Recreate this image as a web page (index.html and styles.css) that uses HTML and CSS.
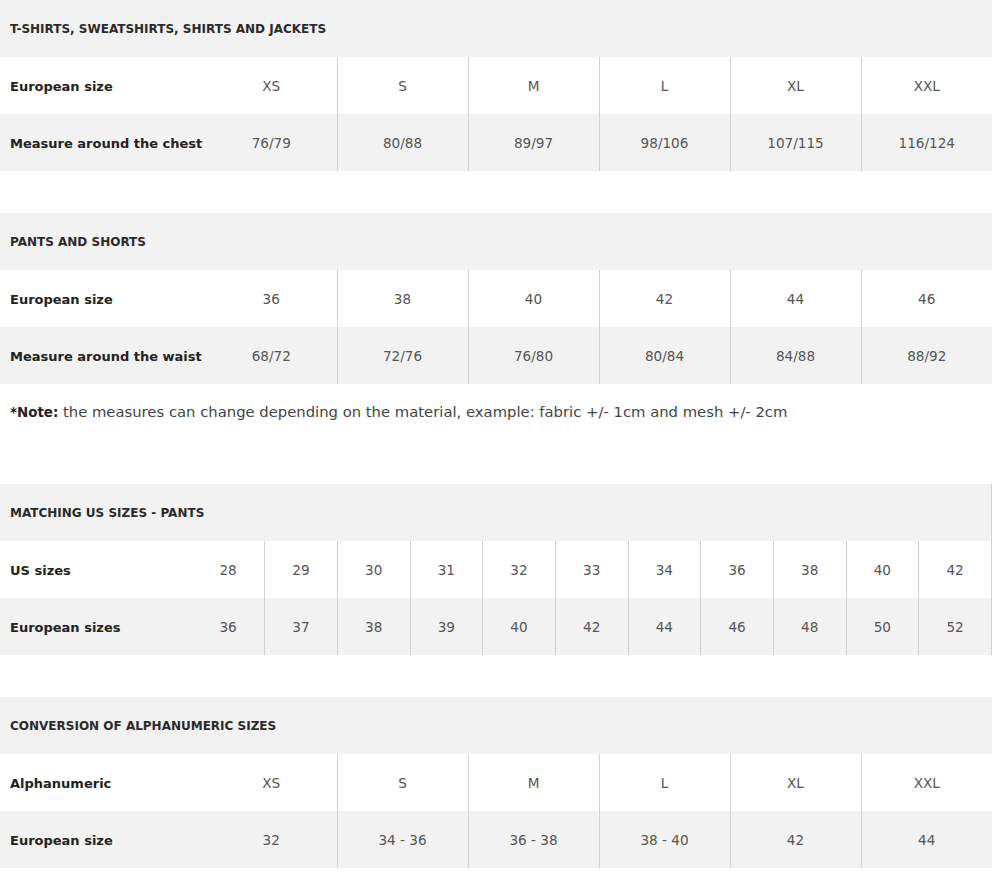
FILE: index.html
```html
<!DOCTYPE html>
<html lang="en">
<head>
<meta charset="utf-8">
<title>Size chart</title>
<link rel="stylesheet" href="styles.css">
</head>
<body>
<table class="chart">
  <colgroup><col class="c-label6"><col><col><col><col><col><col></colgroup>
  <tr><th class="title" colspan="7">T-SHIRTS, SWEATSHIRTS, SHIRTS AND JACKETS</th></tr>
  <tr><td class="label">European size</td><td>XS</td><td class="sep">S</td><td class="sep">M</td><td class="sep">L</td><td class="sep">XL</td><td class="sep">XXL</td></tr>
  <tr class="alt"><td class="label">Measure around the chest</td><td>76/79</td><td class="sep">80/88</td><td class="sep">89/97</td><td class="sep">98/106</td><td class="sep">107/115</td><td class="sep">116/124</td></tr>
</table>

<table class="chart flush">
  <colgroup><col class="c-label6"><col><col><col><col><col><col></colgroup>
  <tr><th class="title" colspan="7">PANTS AND SHORTS</th></tr>
  <tr><td class="label">European size</td><td>36</td><td class="sep">38</td><td class="sep">40</td><td class="sep">42</td><td class="sep">44</td><td class="sep">46</td></tr>
  <tr class="alt"><td class="label">Measure around the waist</td><td>68/72</td><td class="sep">72/76</td><td class="sep">76/80</td><td class="sep">80/84</td><td class="sep">84/88</td><td class="sep">88/92</td></tr>
</table>

<p class="note"><b>*Note:</b> the measures can change depending on the material, example: fabric +/- 1cm and mesh +/- 2cm</p>

<table class="chart chart-us">
  <colgroup><col class="c-label11"><col><col><col><col><col><col><col><col><col><col><col></colgroup>
  <tr><th class="title" colspan="12">MATCHING US SIZES - PANTS</th></tr>
  <tr><td class="label">US sizes</td><td>28</td><td class="sep">29</td><td class="sep">30</td><td class="sep">31</td><td class="sep">32</td><td class="sep">33</td><td class="sep">34</td><td class="sep">36</td><td class="sep">38</td><td class="sep">40</td><td class="sep">42</td></tr>
  <tr class="alt"><td class="label">European sizes</td><td>36</td><td class="sep">37</td><td class="sep">38</td><td class="sep">39</td><td class="sep">40</td><td class="sep">42</td><td class="sep">44</td><td class="sep">46</td><td class="sep">48</td><td class="sep">50</td><td class="sep">52</td></tr>
</table>

<table class="chart">
  <colgroup><col class="c-label6"><col><col><col><col><col><col></colgroup>
  <tr><th class="title" colspan="7">CONVERSION OF ALPHANUMERIC SIZES</th></tr>
  <tr><td class="label">Alphanumeric</td><td>XS</td><td class="sep">S</td><td class="sep">M</td><td class="sep">L</td><td class="sep">XL</td><td class="sep">XXL</td></tr>
  <tr class="alt"><td class="label">European size</td><td>32</td><td class="sep">34 - 36</td><td class="sep">36 - 38</td><td class="sep">38 - 40</td><td class="sep">42</td><td class="sep">44</td></tr>
</table>
</body>
</html>
```

FILE: styles.css
```css
html, body {
  margin: 0;
  padding: 0;
  background: #ffffff;
}

body {
  font-family: "DejaVu Sans", "Liberation Sans", sans-serif;
  color: #333333;
}

.chart {
  width: 992px;
  border-collapse: collapse;
  table-layout: fixed;
  margin: 0 0 42px 0;
}

.chart.flush,
.chart:last-child {
  margin-bottom: 0;
}

.c-label6 {
  width: 206px;
}

.c-label11 {
  width: 192px;
}

.chart .title {
  background: #f2f2f2;
  height: 56px;
  padding: 1px 10px 0 10px;
  text-align: left;
  font-size: 12px;
  font-weight: bold;
  color: #2a2a2a;
}

.chart td {
  height: 56px;
  padding: 1px 0 0 0;
  text-align: center;
  font-size: 13.6px;
  color: #555555;
  background: #ffffff;
}

.chart .alt td {
  background: #f2f2f2;
}

.chart td.label {
  text-align: left;
  padding-left: 10px;
  font-size: 13px;
  font-weight: bold;
  color: #222222;
}

.chart td.sep {
  border-left: 1px solid #d2d2d2;
}

.chart-us {
  border-right: 1px solid #d2d2d2;
}

.note {
  margin: 0;
  height: 80px;
  padding: 20px 10px 0 10px;
  line-height: 16px;
  font-size: 14.8px;
  color: #444444;
  white-space: nowrap;
}

.note b {
  color: #222222;
  font-size: 13.4px;
}
```
